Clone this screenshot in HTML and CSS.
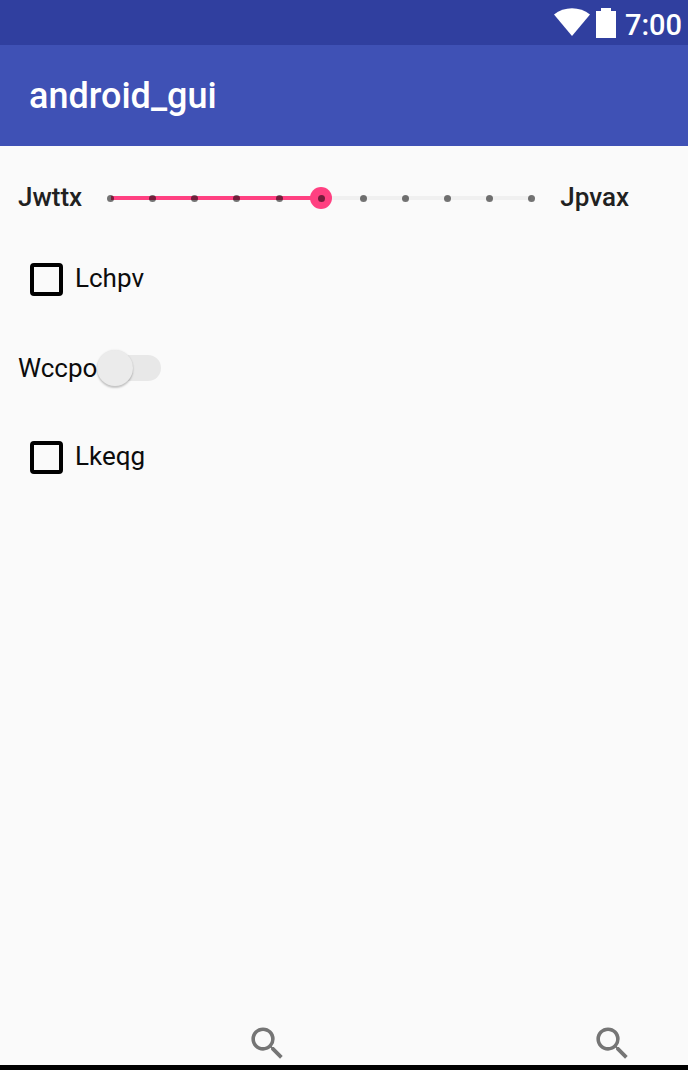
FILE: index.html
```html
<!DOCTYPE html>
<html lang="en">
<head>
<meta charset="utf-8">
<meta name="viewport" content="width=device-width, initial-scale=1">
<title>android_gui</title>
<link rel="stylesheet" href="styles.css">
</head>
<body>
<div class="status-bar">
  <svg class="wifi" viewBox="0 0 36 28" aria-hidden="true"><path d="M0 6.500C10-2 26-2 36 6.500L18 28z"/></svg>
  <svg class="battery" viewBox="0 0 20 30" aria-hidden="true"><path d="M5 0h10v3h5v27H0V3h5z"/></svg>
  <span class="clock">7:00</span>
</div>
<header class="app-bar"><h1 class="app-title">android_gui</h1></header>
<main class="content">
  <div class="slider-row">
    <label class="slider-label" for="level">Jwttx</label>
    <div class="slider">
      <input class="slider-input" id="level" type="range" min="0" max="10" value="5">
      <div class="ticks" aria-hidden="true">
        <i class="tick"></i><i class="tick"></i><i class="tick"></i><i class="tick"></i><i class="tick"></i><i class="tick"></i><i class="tick"></i><i class="tick"></i><i class="tick"></i><i class="tick"></i><i class="tick"></i>
      </div>
    </div>
    <span class="slider-label">Jpvax</span>
  </div>
  <label class="check-row"><input class="checkbox" type="checkbox"><span class="check-text">Lchpv</span></label>
  <label class="switch-row">Wccpo<input class="switch" type="checkbox" role="switch"></label>
  <label class="check-row"><input class="checkbox" type="checkbox"><span class="check-text">Lkeqg</span></label>
</main>
<footer class="bottom-bar">
  <button class="search-button" type="button" aria-label="Search"><svg class="search-icon" viewBox="0 0 24 24"><path d="M15.500 14h-.79l-.28-.27A6.471 6.471 0 0 0 16 9.500 6.500 6.500 0 1 0 9.500 16c1.610 0 3.090-.59 4.230-1.570l.27.280v.79l5 4.990L20.490 19l-4.990-5zm-6 0C7.010 14 5 11.990 5 9.500S7.010 5 9.500 5 14 7.010 14 9.500 11.990 14 9.500 14z"/></svg></button>
  <button class="search-button" type="button" aria-label="Search"><svg class="search-icon" viewBox="0 0 24 24"><path d="M15.500 14h-.79l-.28-.27A6.471 6.471 0 0 0 16 9.500 6.500 6.500 0 1 0 9.500 16c1.610 0 3.090-.59 4.230-1.570l.27.280v.79l5 4.990L20.490 19l-4.990-5zm-6 0C7.010 14 5 11.990 5 9.500S7.010 5 9.500 5 14 7.010 14 9.500 11.990 14 9.500 14z"/></svg></button>
</footer>
</body>
</html>
```
FILE: styles.css
```css
* {
  box-sizing: border-box;
}

body {
  display: flex;
  flex-direction: column;
  min-height: 100vh;
  margin: 0;
  background: #fafafa;
  color: #0c0c0c;
  font-family: Roboto, sans-serif;
  font-size: 26px;
  line-height: 32px;
}

.status-bar {
  display: flex;
  align-items: center;
  justify-content: flex-end;
  height: 45px;
  padding-right: 6px;
  background: #303f9f;
  color: #fff;
}

.wifi {
  width: 36px;
  height: 28px;
  margin: 0 6px 2px 0;
  fill: #fff;
}

.battery {
  width: 20px;
  height: 30px;
  margin-right: 9px;
  fill: #fff;
}

.clock {
  padding-top: 4px;
  font-size: 29px;
  font-weight: 500;
}

.app-bar {
  display: flex;
  align-items: center;
  height: 101px;
  padding: 0 29px;
  background: #3f51b5;
  color: #fff;
}

.app-title {
  margin: 0;
  font-size: 36px;
  font-weight: 500;
  line-height: 40px;
}

.content {
  display: flex;
  flex: 1;
  flex-direction: column;
  align-items: flex-start;
  padding-top: 35px;
}

.slider-row {
  display: flex;
  align-items: center;
  gap: 18px;
  width: 100%;
  padding: 0 59px 0 18px;
  margin-bottom: 49px;
}

.slider-label {
  color: #212121;
  font-weight: 500;
}

.slider {
  display: grid;
  flex: 1;
  align-items: center;
  padding-top: 2px;
}

.slider-input {
  grid-area: 1 / 1;
  width: 100%;
  height: 22px;
  margin: 0;
  appearance: none;
  background: linear-gradient(to right, transparent 11px, #ff4081 11px, #ff4081 50%, #f0f0f0 50%, #f0f0f0 calc(100% - 11px), transparent calc(100% - 11px)) center / 100% 4px no-repeat;
}

.slider-input::-webkit-slider-thumb {
  width: 22px;
  height: 22px;
  appearance: none;
  border-radius: 50%;
  background: #ff4081;
}

.ticks {
  display: flex;
  z-index: 1;
  grid-area: 1 / 1;
  justify-content: space-between;
  padding: 0 7px;
  pointer-events: none;
}

.tick {
  width: 7px;
  height: 7px;
  border-radius: 50%;
  background: rgba(0, 0, 0, 0.54);
}

.check-row {
  display: flex;
  align-items: center;
  gap: 12px;
  padding-left: 30px;
}

.check-text {
  padding-bottom: 2px;
}

.checkbox {
  width: 33px;
  height: 33px;
  margin: 0;
  appearance: none;
  border: 4px solid #000;
  border-radius: 4px;
}

.checkbox:checked {
  background: #ff4081;
}

.switch-row {
  display: flex;
  align-items: center;
  padding-left: 18px;
  margin: 56px 0;
}

.switch {
  display: flex;
  align-items: center;
  width: 64px;
  height: 26px;
  margin: 0;
  appearance: none;
  border-radius: 13px;
  background: #e8e8e8;
}

.switch::before {
  width: 36px;
  height: 36px;
  flex: none;
  border-radius: 50%;
  background: #ebebeb;
  box-shadow: 0 2px 2px rgba(0, 0, 0, 0.2), 0 0 2px rgba(0, 0, 0, 0.1);
  content: "";
}

.switch:checked {
  justify-content: flex-end;
}

.bottom-bar {
  display: grid;
  grid-template-columns: 1fr 1fr;
  gap: 2px;
  border-bottom: 5px solid #000;
}

.search-button {
  display: flex;
  justify-content: flex-end;
  padding: 0 54px 0 0;
  border: 0;
  background: none;
}

.search-icon {
  width: 43px;
  height: 43px;
  fill: #757575;
}
```
